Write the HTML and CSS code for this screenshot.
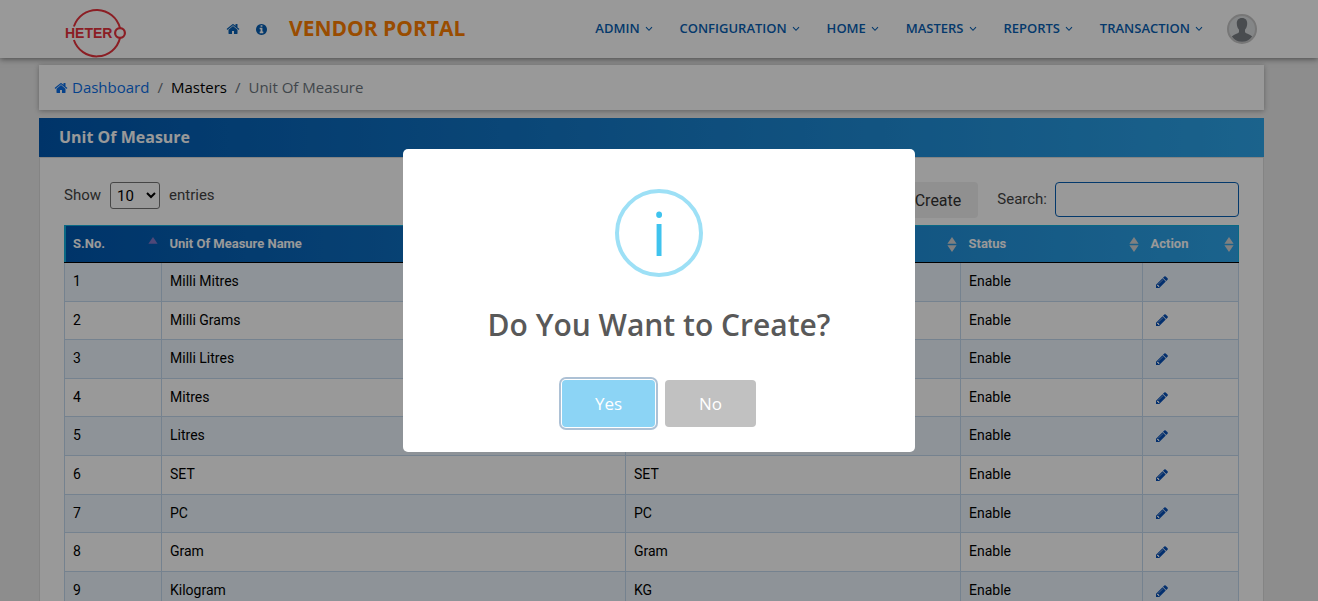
FILE: index.html
```html
<!DOCTYPE html>
<html lang="en">
<head>
<meta charset="utf-8">
<meta name="viewport" content="width=device-width, initial-scale=1">
<title>Vendor Portal - Unit Of Measure</title>
<link rel="stylesheet" href="styles.css">
</head>
<body>
<svg class="sprite" aria-hidden="true">
  <symbol id="home" viewBox="0 0 1792 1792"><path d="M1472 992v480q0 26-19 45t-45 19h-384v-384h-256v384h-384q-26 0-45-19t-19-45v-480q0-1 .5-3t.5-3l575-474 575 474q1 2 1 6zm223-69l-62 74q-8 9-21 11h-3q-13 0-21-7l-692-577-692 577q-12 8-24 7-13-2-21-11l-62-74q-8-10-7-23.5t11-21.5l719-599q32-26 76-26t76 26l244 204v-195q0-14 9-23t23-9h192q14 0 23 9t9 23v408l219 182q10 8 11 21.5t-7 23.5z"/></symbol>
  <symbol id="info" viewBox="128 128 1536 1536"><path d="M1152 1376v-160q0-14-9-23t-23-9h-96v-512q0-14-9-23t-23-9h-320q-14 0-23 9t-9 23v160q0 14 9 23t23 9h96v320h-96q-14 0-23 9t-9 23v160q0 14 9 23t23 9h448q14 0 23-9t9-23zm-128-896v-160q0-14-9-23t-23-9h-192q-14 0-23 9t-9 23v160q0 14 9 23t23 9h192q14 0 23-9t9-23zm640 416q0 209-103 385.5t-279.5 279.5-385.5 103-385.5-103-279.5-279.5-103-385.5 103-385.5 279.5-279.5 385.5-103 385.5 103 279.5 279.5 103 385.5z"/></symbol>
  <symbol id="pencil" viewBox="128 128 1536 1536"><path d="M491 1536l91-91-235-235-91 91v107h128v128h107zm523-928q0-22-22-22-10 0-17 7l-542 542q-7 7-7 17 0 22 22 22 10 0 17-7l542-542q7-7 7-17zm-54-192l416 416-832 832h-416v-416zm683 96q0 53-37 90l-166 166-416-416 166-165q36-38 90-38 53 0 91 38l235 234q37 39 37 91z"/></symbol>
  <symbol id="chevron" viewBox="0 0 8 6"><path d="M1 1.2 4 4.3 7 1.2" fill="none" stroke="currentColor" stroke-width="1.1"/></symbol>
  <symbol id="sort" viewBox="0 0 10 15"><path d="M5 0 9.6 6.8H.4zM5 15 .4 8.2h9.2z"/></symbol>
  <symbol id="sort-up" viewBox="0 0 10 15"><path d="M5 0 9.6 6.8H.4z"/></symbol>
</svg>

<header class="topbar">
  <a class="logo" href="#" aria-label="Hetero">
    <svg width="62" height="52" viewBox="0 0 62 52">
      <path d="M8.9 20.500A24 24 0 0 1 55 22M55 32A24 24 0 0 1 8.900 34" fill="none" stroke="#e8323c" stroke-width="2"/>
      <text x="0" y="32" class="logo-text">HETER</text>
      <circle cx="55" cy="27" r="4.900" fill="none" stroke="#e8323c" stroke-width="2.200"/>
    </svg>
  </a>
  <div class="shortcuts">
    <a href="#" aria-label="Home"><svg class="icon"><use href="#home"/></svg></a>
    <a href="#" aria-label="Information"><svg class="icon icon-info"><use href="#info"/></svg></a>
  </div>
  <div class="brand">VENDOR PORTAL</div>
  <nav class="menu" aria-label="Main">
    <a href="#">ADMIN <svg class="chev"><use href="#chevron"/></svg></a>
    <a href="#">CONFIGURATION <svg class="chev"><use href="#chevron"/></svg></a>
    <a href="#">HOME <svg class="chev"><use href="#chevron"/></svg></a>
    <a href="#">MASTERS <svg class="chev"><use href="#chevron"/></svg></a>
    <a href="#">REPORTS <svg class="chev"><use href="#chevron"/></svg></a>
    <a href="#">TRANSACTION <svg class="chev"><use href="#chevron"/></svg></a>
  </nav>
  <a class="avatar" href="#" aria-label="Account">
    <svg width="30" height="30" viewBox="0 0 30 30">
      <circle cx="15" cy="15" r="14" fill="#dcdfe2" stroke="#c6c6c6" stroke-width="2"/>
      <path d="M15 4c3.600 0 5.400 2.400 5.200 5.800-.1 2.600-.9 4.600-2.200 6v2.400c1.300 1.500 4.600 1.800 7.200 4.300A12.700 12.700 0 0 1 15 27.800 12.700 12.700 0 0 1 4.800 22.500c2.600-2.500 5.900-2.800 7.200-4.300v-2.400c-1.300-1.400-2.100-3.400-2.200-6C9.600 6.400 11.400 4 15 4z" fill="#7b7f84"/>
    </svg>
  </a>
</header>

<main class="page">
  <nav class="crumbs" aria-label="Breadcrumb">
    <a href="#"><svg class="icon"><use href="#home"/></svg> Dashboard</a>
    <span class="sep">/</span>
    <span class="section">Masters</span>
    <span class="sep">/</span>
    <span>Unit Of Measure</span>
  </nav>

  <section class="card">
    <h1 class="card-title">Unit Of Measure</h1>
    <div class="card-body">
      <div class="tools">
        <label class="length">Show
          <select><option>10</option><option>25</option><option>50</option></select>
          entries</label>
        <button class="create" type="button">Create</button>
        <label class="search">Search: <input type="search"></label>
      </div>
      <table class="grid">
        <colgroup><col class="c-no"><col><col class="c-desc"><col class="c-status"><col class="c-action"></colgroup>
        <thead>
          <tr>
            <th><div>S.No. <svg class="sort sorted"><use href="#sort-up"/></svg></div></th>
            <th><div>Unit Of Measure Name <svg class="sort"><use href="#sort"/></svg></div></th>
            <th><div><span></span> <svg class="sort"><use href="#sort"/></svg></div></th>
            <th><div>Status <svg class="sort"><use href="#sort"/></svg></div></th>
            <th><div>Action <svg class="sort"><use href="#sort"/></svg></div></th>
          </tr>
        </thead>
        <tbody>
          <tr><td>1</td><td>Milli Mitres</td><td></td><td>Enable</td><td><a href="#" aria-label="Edit"><svg class="edit"><use href="#pencil"/></svg></a></td></tr>
          <tr><td>2</td><td>Milli Grams</td><td></td><td>Enable</td><td><a href="#" aria-label="Edit"><svg class="edit"><use href="#pencil"/></svg></a></td></tr>
          <tr><td>3</td><td>Milli Litres</td><td></td><td>Enable</td><td><a href="#" aria-label="Edit"><svg class="edit"><use href="#pencil"/></svg></a></td></tr>
          <tr><td>4</td><td>Mitres</td><td></td><td>Enable</td><td><a href="#" aria-label="Edit"><svg class="edit"><use href="#pencil"/></svg></a></td></tr>
          <tr><td>5</td><td>Litres</td><td></td><td>Enable</td><td><a href="#" aria-label="Edit"><svg class="edit"><use href="#pencil"/></svg></a></td></tr>
          <tr><td>6</td><td>SET</td><td>SET</td><td>Enable</td><td><a href="#" aria-label="Edit"><svg class="edit"><use href="#pencil"/></svg></a></td></tr>
          <tr><td>7</td><td>PC</td><td>PC</td><td>Enable</td><td><a href="#" aria-label="Edit"><svg class="edit"><use href="#pencil"/></svg></a></td></tr>
          <tr><td>8</td><td>Gram</td><td>Gram</td><td>Enable</td><td><a href="#" aria-label="Edit"><svg class="edit"><use href="#pencil"/></svg></a></td></tr>
          <tr><td>9</td><td>Kilogram</td><td>KG</td><td>Enable</td><td><a href="#" aria-label="Edit"><svg class="edit"><use href="#pencil"/></svg></a></td></tr>
        </tbody>
      </table>
    </div>
  </section>
</main>

<div class="backdrop">
  <div class="dialog" role="dialog" aria-modal="true" aria-labelledby="dialog-title">
    <div class="dialog-icon" aria-hidden="true">i</div>
    <h2 id="dialog-title">Do You Want to Create?</h2>
    <div class="dialog-actions">
      <button class="yes" type="button">Yes</button>
      <button class="no" type="button">No</button>
    </div>
  </div>
</div>
</body>
</html>
```
FILE: styles.css
```css
* { box-sizing: border-box; }

body {
  margin: 0;
  background: #ebebeb;
  color: #444;
  font-family: "Open Sans", sans-serif;
  font-size: 15px;
  line-height: 1.5;
  overflow: hidden;
}

a { color: inherit; text-decoration: none; }
svg { display: block; flex: none; fill: currentColor; }
.sprite { position: absolute; width: 0; height: 0; }
.icon { width: 14px; height: 14px; }
.icon-info { width: 11px; height: 11px; }

.topbar {
  display: flex;
  align-items: center;
  height: 58px;
  padding: 0 61px 0 65px;
  background: #fff;
  color: #0860b4;
  box-shadow: 0 1px 6px rgba(0, 0, 0, .5);
}
.logo { align-self: flex-end; }
.logo-text {
  fill: #e8323c;
  font-family: "Liberation Sans", sans-serif;
  font-size: 14px;
  font-weight: 700;
}
.shortcuts { display: flex; align-items: center; gap: 16px; margin-left: 99px; }
.brand {
  margin-left: 22px;
  color: #ff7f00;
  font-size: 21px;
  font-weight: 700;
}
.menu {
  display: flex;
  flex: 1;
  justify-content: space-between;
  margin: 0 24px 0 130px;
  font-size: 13px;
  font-weight: 600;
}
.menu a { display: flex; align-items: center; gap: 5px; }
.chev { width: 8px; height: 6px; }

.page { padding: 7px 54px 0 39px; }

.crumbs {
  display: flex;
  align-items: center;
  gap: 8px;
  height: 45px;
  padding: 0 15px;
  background: #fff;
  color: #6c757d;
  box-shadow: 0 1px 5px rgba(0, 0, 0, .3);
}
.crumbs a { display: flex; align-items: center; gap: 4px; color: #0b6fe8; }
.crumbs .section { color: #000; }

.card {
  margin-top: 8px;
  background: #fff;
}
.card-title {
  margin: 0;
  padding: 7px 20px 8px;
  background: linear-gradient(90deg, #0058b0, #2da5ea);
  color: #fff;
  font-size: 16px;
  font-weight: 700;
}
.card-body {
  padding: 24px 24px 30px;
  border: 1px solid #dcdcdc;
  font-family: Roboto, sans-serif;
}

.tools {
  display: flex;
  align-items: flex-start;
  height: 43px;
}
.length { display: flex; align-items: center; gap: 9px; min-height: 27px; }
.length select {
  width: 50px;
  height: 27px;
  padding: 0 2px;
  border: 1px solid #767676;
  border-radius: 3px;
  background: #fff;
  color: #000;
  font: inherit;
}
.create {
  height: 36px;
  margin-left: auto;
  padding: 0 17px;
  border: 0;
  border-radius: 4px;
  background: #f0f0f0;
  color: #333;
  font-family: Roboto, sans-serif;
  font-size: 16px;
}
.search { display: flex; align-items: center; gap: 8px; margin-left: 19px; }
.search input {
  width: 184px;
  height: 35px;
  border: 1px solid #0860b4;
  border-radius: 4px;
  background: #fff;
}

.grid {
  width: 100%;
  table-layout: fixed;
  border-collapse: collapse;
  color: #000;
  font-size: 14px;
  line-height: 1.4;
}
.c-no { width: 97px; }
.c-desc { width: 335px; }
.c-status { width: 182px; }
.c-action { width: 96px; }
.grid thead tr {
  background: linear-gradient(90deg, #0058b0, #2da5ea);
  color: #fff;
}
.grid th {
  height: 37px;
  padding: 0 4px 0 8px;
  border-top: 1px solid #12b0dc;
  border-bottom: 1px solid #000;
  text-align: left;
  font-size: 13px;
  font-weight: 700;
}
.grid th:first-child {
  border-left: 1px solid #12b0dc;
  box-shadow: inset 1px 0 #12b0dc;
}
.grid th:last-child { border-right: 1px solid #12b0dc; }
.grid th div { display: flex; align-items: center; justify-content: space-between; }
.sort { width: 10px; height: 15px; color: #d6d6d6; }
.sorted { color: #8478c8; }
.grid td {
  padding: 9px 8px;
  border: 1px solid #c3d9ee;
}
.grid tbody tr:nth-child(odd) { background: #edf6fd; }
.edit { width: 12px; height: 12px; margin-left: 5px; color: #0850b8; }

.backdrop {
  position: fixed;
  inset: 0;
  display: flex;
  align-items: center;
  justify-content: center;
  background: rgba(0, 0, 0, .4);
}
.dialog {
  display: flex;
  flex-direction: column;
  align-items: center;
  width: 512px;
  max-width: 100%;
  padding: 40px 20px 25px;
  border-radius: 5px;
  background: #fff;
}
.dialog-icon {
  width: 88px;
  height: 88px;
  border: 4px solid #9de0f6;
  border-radius: 50%;
  color: #3fc3ee;
  font-size: 60px;
  line-height: 80px;
  text-align: center;
}
.dialog h2 {
  margin: 30px 0 37px;
  color: #595959;
  font-size: 30px;
  font-weight: 600;
  line-height: 36px;
}
.dialog-actions { display: flex; gap: 10px; }
.dialog-actions button {
  height: 47px;
  padding: 0 34px;
  border: 0;
  border-radius: 4px;
  color: #fff;
  font-family: inherit;
  font-size: 17px;
}
.dialog-actions .yes {
  padding: 0 33px;
  background: #8cd4f5;
  box-shadow: 0 0 0 1px #fff, 0 0 0 3px rgba(50, 100, 150, .4);
}
.no { background: #c1c1c1; }
```
